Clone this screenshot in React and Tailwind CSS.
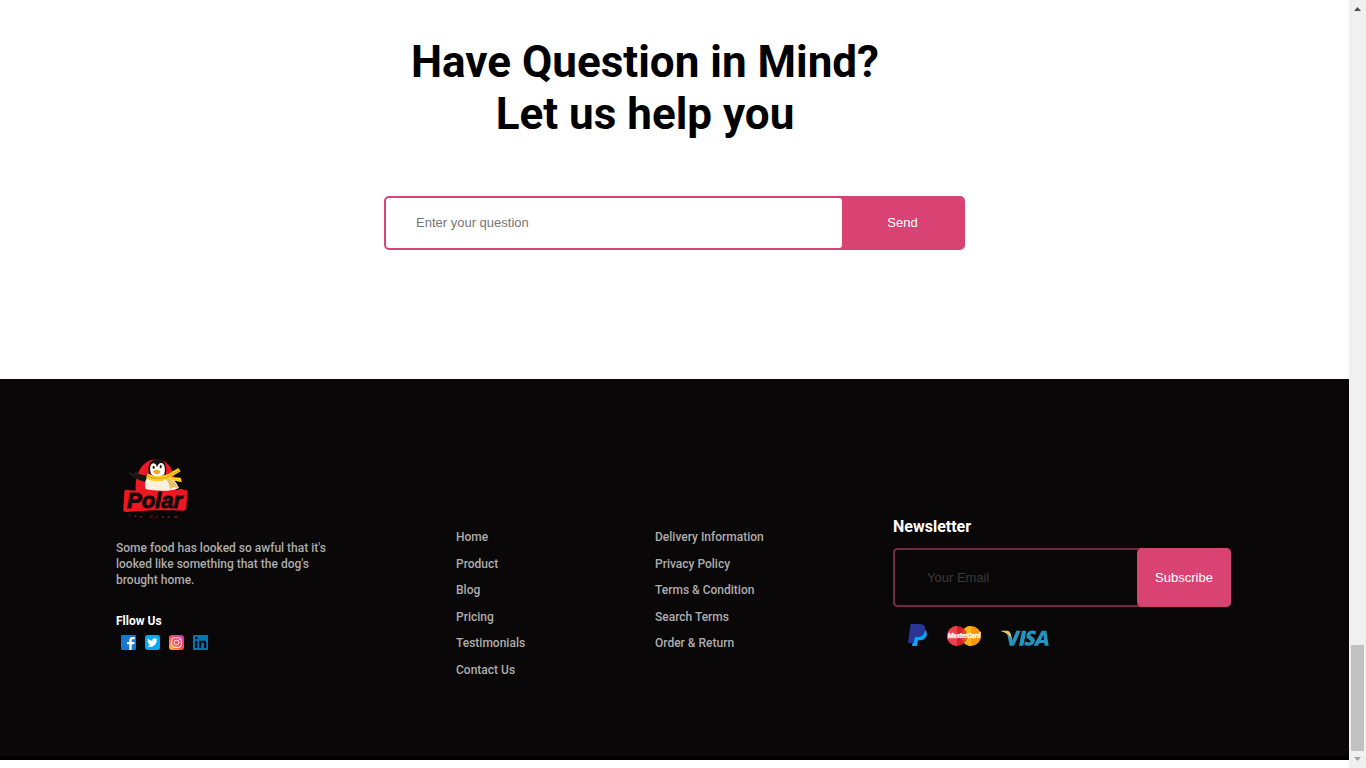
const productLinks = ['Home', 'Product', 'Blog', 'Pricing', 'Testimonials', 'Contact Us'];
const policyLinks = ['Delivery Information', 'Privacy Policy', 'Terms & Condition', 'Search Terms', 'Order & Return'];

function PolarLogo() {
  return (
    <svg viewBox="18 21 240 189" className="h-[63px] w-20" role="img" aria-label="Polar Ice Cream">
      <path d="M77 120C74 60 103 26 137 25c39 0 62 37 59 95z" fill="#ee1824" />
      <path d="M112 93C94 92 74 83 58 66c8 3 16 4 22 5l-6-9c14 8 30 12 46 12z" fill="#171414" stroke="#594d43" strokeWidth="1" />
      <path d="M107 116c-6-22 2-34 11-46l52 2c18 10 30 22 37 39-30 13-70 15-100 5z" fill="#f9f2df" />
      <path d="M165 80c20 4 35 16 40 32-10-5-17-4-25 2-2-15-7-25-15-34z" fill="#e8bf68" />
      <path d="M117 68c-6-22 2-43 25-44 23 0 30 22 25 48q-26 14-50-4z" fill="#151213" />
      <path d="M123 68c-6-17-1-31 8-31 6 1 9 7 10 12 2-8 7-14 14-13 9 2 12 17 8 34-11 10-29 11-40-2z" fill="#fffdf4" />
      <ellipse cx="131" cy="49" rx="3" ry="5" fill="#111" />
      <ellipse cx="152" cy="47" rx="3" ry="5" fill="#111" />
      <path d="M129 60c6-5 13-6 23 1-4 10-17 13-23-1z" fill="#f4a719" />
      <path d="M112 67c17 13 41 9 61 3l32-19 7 10-29 17 30 2 2 14-42-9c-24 9-52 7-64-4z" fill="#fccd21" />
      <path d="M113 74c17 11 41 10 62 3l31-18" fill="none" stroke="#e99a17" strokeWidth="3" />
      <path d="M43 122q0-6 7-6c22 4 40 4 57-2 25 7 78 7 106-1 7 2 10 5 16 5 3 0 4 2 3 6l-3 46q-1 8-8 9c-54-2-112-2-170 4q-12 1-11-8z" fill="#ed1721" />
      <text x="51" y="170" fill="#160b0c" stroke="#160b0c" strokeWidth="3" fontFamily="Liberation Sans, sans-serif" fontSize="66" fontWeight="700" fontStyle="italic">Polar</text>
      <circle cx="226" cy="133" r="3" fill="none" stroke="#9d1821" strokeWidth="1.5" />
      <g fill="#b51822" fontFamily="Liberation Sans, sans-serif" fontSize="12" fontWeight="700">
        <text x="56 72 89 119 137 155 172 192" y="199 199 200 200 201 202 202 202">IceCream</text>
      </g>
    </svg>
  );
}

function Facebook() {
  return (
    <svg viewBox="0 0 45 45" className="size-[15px]">
      <rect width="45" height="45" rx="4" fill="#1976d2" />
      <path d="M25 45V28h-7v-7h7v-4c0-8 4-11 10-11h6v7h-5c-3 0-4 1-4 4v4h9l-1 7h-8v17z" fill="#fff" />
    </svg>
  );
}

function Twitter() {
  return (
    <svg viewBox="0 0 45 45" className="size-[15px]">
      <rect width="45" height="45" rx="8" fill="#03a9f4" />
      <path d="M38 13l-4 1 3-4-4 2c-5-5-12-1-11 5-6 0-10-3-13-7-2 4-1 7 2 9l-3-1c0 4 2 6 5 7h-3c1 3 3 5 6 5-3 2-6 3-9 3 13 7 28-1 28-17z" fill="#fff" />
    </svg>
  );
}

function Instagram() {
  return (
    <svg viewBox="0 0 45 45" className="size-[15px]">
      <defs>
        <linearGradient id="insta" x1="0" y1="1" x2="1" y2="0">
          <stop offset="0" stopColor="#ffc44d" />
          <stop offset=".4" stopColor="#ff5b4d" />
          <stop offset=".7" stopColor="#f13b79" />
          <stop offset="1" stopColor="#b440c0" />
        </linearGradient>
      </defs>
      <rect width="45" height="45" rx="9" fill="url(#insta)" />
      <g fill="none" stroke="#fff" strokeWidth="3">
        <rect x="8" y="8" width="29" height="29" rx="8" />
        <circle cx="22.5" cy="22.5" r="7" />
      </g>
      <circle cx="31" cy="14" r="2" fill="#fff" />
    </svg>
  );
}

function LinkedIn() {
  return (
    <svg viewBox="0 0 45 45" className="size-[15px]">
      <rect width="45" height="45" rx="3" fill="#0277b5" />
      <g fill="#090708">
        <circle cx="10" cy="9" r="4" />
        <path d="M6 17h7v22H6zM18 17h7v3c5-6 15-4 15 6v13h-7V27c0-6-8-5-8 0v12h-7z" />
      </g>
    </svg>
  );
}

function PayPal() {
  return (
    <svg viewBox="0 0 57 66" className="h-[22px] w-[19px]" role="img" aria-label="PayPal">
      <path d="M49 15c13 8 9 34-14 34h-5l-3 17H12l4-22z" fill="#03a9f4" />
      <path d="M10 0h27c12 0 17 9 14 20-3 14-12 19-24 19h-6l-4 18H0L7 3q1-3 3-3z" fill="#283593" />
    </svg>
  );
}

function MasterCard() {
  return (
    <svg viewBox="0 0 102 60" className="h-5 w-[34px]" role="img" aria-label="MasterCard">
      <circle cx="72" cy="30" r="30" fill="#ff9800" />
      <path d="M51 9c5-6 12-9 21-9v60c-9 0-16-4-21-9z" fill="#ffb21d" />
      <circle cx="30" cy="30" r="30" fill="#d9222a" />
      <path d="M30 0a30 30 0 0 0 0 60z" fill="#ee4149" />
      <path d="M51 9a30 30 0 0 0 0 42a30 30 0 0 0 0-42z" fill="#e45a16" />
      <path d="M46 18h11M44 24h15M44 38h15M46 44h11" stroke="#ce2329" strokeWidth="2" />
      <text x="3" y="37" fill="#fff" stroke="#fff" strokeWidth=".8" fontFamily="Roboto, sans-serif" fontSize="19" fontWeight="700" fontStyle="italic">MasterCard</text>
    </svg>
  );
}

function Visa() {
  return (
    <svg viewBox="0 0 144 48" className="h-4 w-12" role="img" aria-label="Visa">
      <g fill="#2394bd">
        <path d="M17 4l9 43h13L59 2H46L34 31 28 9zM63 2h13L67 47H54z" />
        <path d="M105 4l-2 10c-8-4-15-3-15 1 0 5 15 6 13 18-2 14-18 17-31 12l2-11c9 5 17 4 17 0 0-5-14-6-13-17 2-14 16-19 29-13z" />
        <path fillRule="evenodd" d="M122 2h14l7 45h-12l-1-8h-15l-4 8H98zM127 15l-7 15h9z" />
      </g>
      <path d="M0 2h20q6 0 8 8l6 21C27 17 16 8 0 4z" fill="#efc362" />
    </svg>
  );
}

const socials = [
  ['Facebook', Facebook],
  ['Twitter', Twitter],
  ['Instagram', Instagram],
  ['LinkedIn', LinkedIn],
];

function LinkList({ label, items }) {
  return (
    <nav aria-label={label} className="pt-[66px]">
      <ul className="grid h-[159px] grid-rows-6 items-center text-xs font-medium text-[#adacac]">
        {items.map((item) => (
          <li key={item}><a href="#">{item}</a></li>
        ))}
      </ul>
    </nav>
  );
}

function Scrollbar() {
  return (
    <div aria-hidden="true" className="sticky top-0 flex h-screen w-[17px] shrink-0 flex-col items-center bg-[#f0f0f0]">
      <svg viewBox="0 0 17 17" className="size-[17px]"><path d="M5 11h7L8.500 7z" fill="#505050" /></svg>
      <div className="flex w-full flex-1 flex-col justify-end px-0.5">
        <div className="h-[106px] bg-[#c1c1c1]" />
      </div>
      <svg viewBox="0 0 17 17" className="size-[17px]"><path d="M5 6h7l-3.500 4z" fill="#a3a3a3" /></svg>
    </div>
  );
}

export default function App() {
  return (
    <div className="flex bg-white font-['Roboto',sans-serif]">
      <div className="min-w-0 flex-1 pb-2">
        <main className="flex flex-col items-center px-4 pt-9 pb-[129px]">
          <h1 className="pr-[59px] text-center text-[44px] leading-[52px] font-bold text-black">
            Have Question in Mind?<br />Let us help you
          </h1>
          <form className="mt-14 flex h-[54px] w-full max-w-[581px] rounded-[5px] border-2 border-[#d84374] bg-[#d84374] font-['Liberation_Sans',sans-serif] text-[13px]" onSubmit={(e) => e.preventDefault()}>
            <input aria-label="Your question" placeholder="Enter your question" className="min-w-0 flex-1 rounded-[3px] bg-white px-[30px] text-black outline-none placeholder:text-[#757575]" />
            <button className="w-[121px] text-white">Send</button>
          </form>
        </main>

        <footer className="grid grid-cols-[340fr_199fr_238fr_338fr] border-b-4 border-black bg-[#090708] pt-[79px] pr-[118px] pb-[73px] pl-[116px]">
          <div>
            <PolarLogo />
            <p className="mt-[19px] max-w-[220px] text-xs leading-4 font-medium text-[#adacac]">
              Some food has looked so awful that it's looked like something that the dog's brought home.
            </p>
            <h2 className="mt-[25px] text-xs leading-4 font-bold text-white">Fllow Us</h2>
            <ul className="mt-1.5 flex gap-[9px] pl-[5px]">
              {socials.map(([name, Icon]) => (
                <li key={name}><a href="#" aria-label={name} className="block"><Icon /></a></li>
              ))}
            </ul>
          </div>
          <LinkList label="Site" items={productLinks} />
          <LinkList label="Policies" items={policyLinks} />
          <section className="pt-[59px]">
            <h2 className="text-base leading-5 font-bold text-white">Newsletter</h2>
            <form className="mt-[11px] flex h-[59px] rounded-[5px] bg-[#d84374] font-['Liberation_Sans',sans-serif] text-[13px]" onSubmit={(e) => e.preventDefault()}>
              <input type="email" aria-label="Email" placeholder="Your Email" className="-mr-1 min-w-0 flex-1 rounded-l-[5px] border-2 border-[#742841] bg-[#090708] px-8 text-white outline-none placeholder:text-[#3a393a]" />
              <button className="relative w-[94px] rounded-[5px] bg-[#d84374] text-white">Subscribe</button>
            </form>
            <div className="mt-[17px] flex items-end gap-5 pl-[15px]">
              <PayPal />
              <MasterCard />
              <Visa />
            </div>
          </section>
        </footer>
      </div>
      <Scrollbar />
    </div>
  );
}
